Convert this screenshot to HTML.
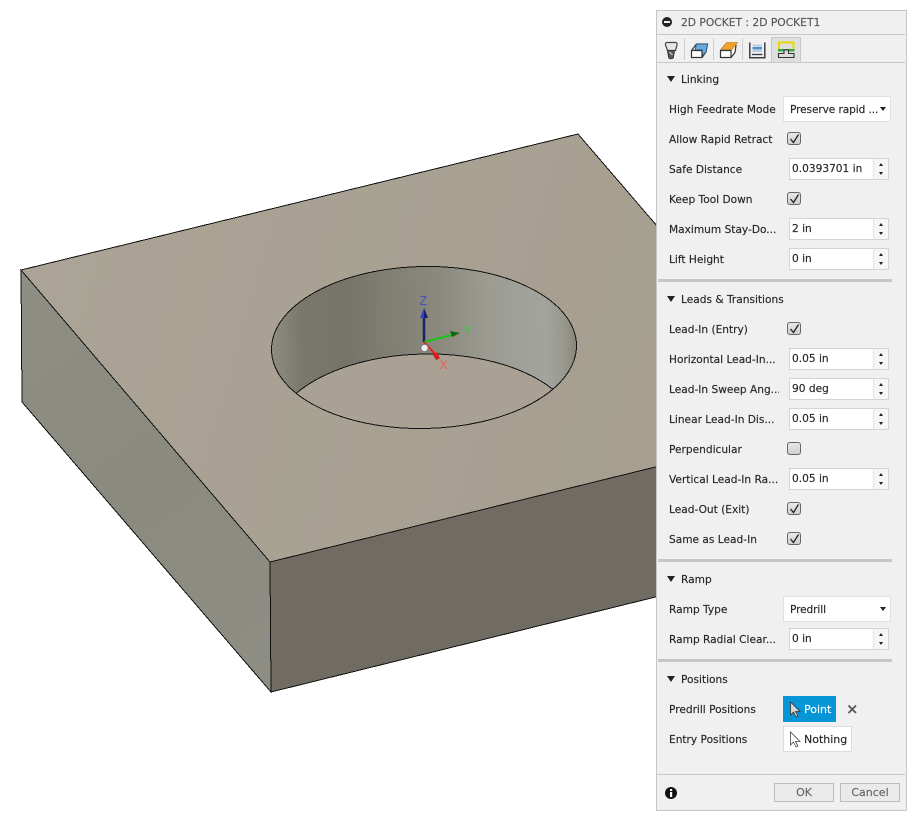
<!DOCTYPE html>
<html><head><meta charset="utf-8"><style>
html,body{margin:0;padding:0;background:#fff}
#r{position:relative;width:917px;height:818px;overflow:hidden;background:#fff;font-family:"DejaVu Sans","Liberation Sans",sans-serif;font-size:10.6px;color:#262626;-webkit-text-stroke:.15px}
#r svg{position:absolute;left:0;top:0}
.p{position:absolute;left:656px;top:10px;width:249px;height:799px;background:#f0f0f0;border:1px solid #c6c6c6}
.a{position:absolute;white-space:nowrap}
.l{position:absolute;left:669px;white-space:nowrap;line-height:18px;width:110px;overflow:hidden}
.h{position:absolute;left:681px;white-space:nowrap;line-height:18px}
.t{position:absolute;left:667px;width:0;height:0;border-left:4.500px solid transparent;border-right:4.500px solid transparent;border-top:6px solid #222}
.s{position:absolute;left:658px;width:234px;height:3px;background:#c6c6c6}
.i{position:absolute;left:789px;width:98px;height:20px;background:#fff;border:1px solid #d4d4d4;line-height:21px;box-sizing:content-box}
.i span{position:absolute;left:2px;top:0}
.i b{position:absolute;left:83px;top:0;width:14px;height:20px;background:#f6f6f6;border-left:1px solid #e2e2e2}
.i b:before{content:"";position:absolute;left:5px;top:4px;border:2.500px solid transparent;border-top:0;border-bottom:3px solid #222}
.i b:after{content:"";position:absolute;left:5px;top:13px;border:2.500px solid transparent;border-bottom:0;border-top:3px solid #222}
.c{position:absolute;left:787px;width:12px;height:11px;border:1px solid #666;border-radius:3px;background:linear-gradient(#e8e8e8,#cfcfcf)}
.d{position:absolute;left:783px;width:106px;height:24px;background:#fff;border:1px solid #e0e0e0;line-height:26px}
.d span{position:absolute;left:6px;top:0;letter-spacing:-.1px}
.d:after{content:"";position:absolute;right:4px;top:10px;border:3px solid transparent;border-bottom:0;border-top:4px solid #222}
.b{position:absolute;top:783px;height:17px;background:#eaeaea;border:1px solid #bdbdbd;color:#666;text-align:center;line-height:18px;font-size:11px}
</style></head><body><div id="r">
<svg width="917" height="818" viewBox="0 0 917 818">
<defs>
<linearGradient id="top" gradientUnits="userSpaceOnUse" x1="21" y1="270" x2="656" y2="450"><stop offset="0" stop-color="#aba496"/><stop offset="1" stop-color="#a69f90"/></linearGradient>
<linearGradient id="left" gradientUnits="userSpaceOnUse" x1="21" y1="300" x2="271" y2="650"><stop offset="0" stop-color="#8e8e84"/><stop offset=".5" stop-color="#8b8a7f"/><stop offset="1" stop-color="#8e8d83"/></linearGradient>
<linearGradient id="wall" gradientUnits="userSpaceOnUse" x1="271" y1="0" x2="577" y2="0">
<stop offset="0" stop-color="#8f8d81"/><stop offset=".1" stop-color="#7a776c"/><stop offset=".25" stop-color="#76736a"/><stop offset=".36" stop-color="#7f7c70"/><stop offset=".55" stop-color="#8b897e"/><stop offset=".72" stop-color="#9c9c93"/><stop offset=".9" stop-color="#a3a49c"/><stop offset=".96" stop-color="#98978d"/><stop offset="1" stop-color="#87857a"/></linearGradient>
<clipPath id="hole"><ellipse cx="424" cy="347.500" rx="152.500" ry="81" transform="rotate(-1 424 347.500)"/></clipPath>
</defs>
<g shape-rendering="crispEdges">
<polygon points="21,270 578,134 700,276 700,456 270,562" fill="url(#top)" stroke="#111" stroke-width="1"/>
<polygon points="21,270 270,562 271,692 22,402" fill="url(#left)" stroke="#111" stroke-width="1"/>
<polygon points="270,562 700,456 700,586 271,692" fill="#716c63" stroke="#111" stroke-width="1"/>
<ellipse cx="424" cy="347.500" rx="152.500" ry="81" transform="rotate(-1 424 347.500)" fill="url(#wall)"/>
<g clip-path="url(#hole)"><ellipse cx="425" cy="436" rx="153" ry="82" transform="rotate(-1 425 436)" fill="#a9a294" stroke="#111" stroke-width="1"/></g>
<ellipse cx="424" cy="347.500" rx="152.500" ry="81" transform="rotate(-1 424 347.500)" fill="none" stroke="#111" stroke-width="1"/>
</g>
<line x1="424" y1="342" x2="424" y2="316" stroke="#1b1f66" stroke-width="2.500"/>
<polygon points="424,308 420,318 428,318" fill="#2c3fd6"/>
<polygon points="424,308 424,318 428,318" fill="#1b1f66"/>
<line x1="424" y1="342" x2="452" y2="335" stroke="#16c416" stroke-width="2"/>
<polygon points="460,333 450,331 452,337" fill="#116611"/>
<line x1="424" y1="342" x2="436" y2="355" stroke="#ee1c1c" stroke-width="2"/>
<polygon points="440,358.500 436,360 433,355 437,352" fill="#d81f1f"/>
<circle cx="424.500" cy="348" r="3.700" fill="#eee" stroke="#777" stroke-width="1"/>
<text x="419.500" y="305" font-family="Liberation Sans" font-size="12.500" fill="#4a4ac8" style="-webkit-text-stroke:0">Z</text>
<text x="463.500" y="335" font-family="Liberation Sans" font-size="12" fill="#30d030" style="-webkit-text-stroke:0">Y</text>
<text x="439.500" y="369" font-family="Liberation Sans" font-size="12" fill="#ea5555" style="-webkit-text-stroke:0">X</text>
</svg>
<div class="p"></div>
<svg width="917" height="818" viewBox="0 0 917 818" style="z-index:2;pointer-events:none">
<line x1="657" y1="34.500" x2="905" y2="34.500" stroke="#c8c8c8"/>
<line x1="657" y1="62.500" x2="905" y2="62.500" stroke="#c8c8c8"/>
<line x1="657" y1="774.500" x2="905" y2="774.500" stroke="#c8c8c8"/>
<rect x="771.500" y="37.500" width="29" height="25" fill="#dedede" stroke="#c8c8c8"/>
<line x1="684.500" y1="38" x2="684.500" y2="60" stroke="#cdcdcd"/>
<line x1="713.500" y1="38" x2="713.500" y2="60" stroke="#cdcdcd"/>
<line x1="742.500" y1="38" x2="742.500" y2="60" stroke="#cdcdcd"/>
<circle cx="667" cy="22" r="5" fill="#222"/><rect x="664" y="21" width="6" height="2" fill="#eee"/>
<!-- tool -->
<path d="M667 42.500h8.500q2 0 1.500 2.500l-1.500 5.500h-8l-2-5.500q-.5-2.500 1.500-2.500z" fill="#e6e6e6" stroke="#444" stroke-width="1.200"/>
<path d="M667.500 50.500h7l-1.300 7.500q-2.200 1.500-4.400 0z" fill="#5a5a5a" stroke="#333"/>
<path d="M669.500 52l3 3" stroke="#ddd"/>
<!-- box blue -->
<path d="M691.500 50.500l5-6.500h11l-1.500 8-4 5.500h-10.500z" fill="#fff" stroke="#333" stroke-width="1.200"/>
<path d="M696.500 44h11l-1.500 8-4 4v-6h-7z" fill="#6aa9dc" stroke="#2c5f8f"/>
<path d="M691.500 50.500h10.500v7" fill="none" stroke="#333" stroke-width="1.200"/>
<!-- box orange -->
<path d="M720.500 50.500l4-5h11.500l-1 7-4 5h-10.500z" fill="#fff" stroke="#333" stroke-width="1.200"/>
<path d="M721 49.500l5.500-7h11l-5.500 7z" fill="#f0a030" stroke="#d08a20" stroke-width=".8"/>
<path d="M720.500 50.500h10.500v7" fill="none" stroke="#333" stroke-width="1.200"/>
<!-- layers -->
<path d="M749.800 42.500v15.200h15v-15.200" fill="none" stroke="#3a3f46" stroke-width="1.500"/>
<rect x="752.500" y="44.500" width="9.500" height="2" fill="#b8cde0"/><rect x="752.500" y="47" width="9.500" height="2.500" fill="#4f8fca"/><rect x="752.500" y="50" width="9.500" height="2" fill="#b8cde0"/>
<path d="M752 54.500h10.500" stroke="#3a3f46" stroke-width="1.300"/>
<!-- linking -->
<path d="M779 49.500v-7h14.500v7" fill="none" stroke="#e8d800" stroke-width="2"/>
<rect x="778" y="49" width="16.500" height="2.500" fill="#37a84a"/>
<path d="M778.500 57.500v-4h5.500v-3.500h4.500v3.500h5.500v4z" fill="#ddd" stroke="#333" stroke-width="1.100"/>
<circle cx="671" cy="793" r="6" fill="#111"/><rect x="670" y="792" width="2.200" height="5" fill="#fff"/><rect x="670" y="789" width="2.200" height="2" fill="#fff"/>
<path d="M848.500 705.500l7.500 7.500M856 705.500l-7.500 7.500" stroke="#555" stroke-width="1.800" fill="none"/>
</svg>
<div style="position:absolute;z-index:3;left:0;top:0;width:917px;height:818px">
<div class="a" style="left:681px;top:15px;line-height:16px;color:#555;font-size:10.700px">2D POCKET : 2D POCKET1</div>

<div class="t" style="top:76px"></div><div class="h" style="top:71px">Linking</div>
<div class="l" style="top:101px">High Feedrate Mode</div>
<div class="d" style="top:96px"><span>Preserve rapid ...</span></div>
<div class="l" style="top:131px">Allow Rapid Retract</div><div class="c" style="top:132px"></div>
<div class="l" style="top:161px">Safe Distance</div><div class="i" style="top:158px"><span>0.0393701 in</span><b></b></div>
<div class="l" style="top:191px">Keep Tool Down</div><div class="c" style="top:192px"></div>
<div class="l" style="top:221px">Maximum Stay-Do...</div><div class="i" style="top:218px"><span>2 in</span><b></b></div>
<div class="l" style="top:251px">Lift Height</div><div class="i" style="top:248px"><span>0 in</span><b></b></div>
<div class="s" style="top:279px"></div>

<div class="t" style="top:296px"></div><div class="h" style="top:291px">Leads &amp; Transitions</div>
<div class="l" style="top:321px">Lead-In (Entry)</div><div class="c" style="top:322px"></div>
<div class="l" style="top:351px">Horizontal Lead-In...</div><div class="i" style="top:348px"><span>0.05 in</span><b></b></div>
<div class="l" style="top:381px">Lead-In Sweep Ang...</div><div class="i" style="top:378px"><span>90 deg</span><b></b></div>
<div class="l" style="top:411px">Linear Lead-In Dis...</div><div class="i" style="top:408px"><span>0.05 in</span><b></b></div>
<div class="l" style="top:441px">Perpendicular</div><div class="c" style="top:442px"></div>
<div class="l" style="top:471px">Vertical Lead-In Ra...</div><div class="i" style="top:468px"><span>0.05 in</span><b></b></div>
<div class="l" style="top:501px">Lead-Out (Exit)</div><div class="c" style="top:502px"></div>
<div class="l" style="top:531px">Same as Lead-In</div><div class="c" style="top:532px"></div>
<div class="s" style="top:559px"></div>

<div class="t" style="top:576px"></div><div class="h" style="top:571px">Ramp</div>
<div class="l" style="top:601px">Ramp Type</div>
<div class="d" style="top:596px"><span>Predrill</span></div>
<div class="l" style="top:631px">Ramp Radial Clear...</div><div class="i" style="top:628px"><span>0 in</span><b></b></div>
<div class="s" style="top:659px"></div>

<div class="t" style="top:676px"></div><div class="h" style="top:671px">Positions</div>
<div class="l" style="top:701px">Predrill Positions</div>
<div class="a" style="left:783px;top:696px;width:53px;height:26px;background:#0696d7;color:#fff;line-height:27px;font-size:11px"><span class="a" style="left:21px">Point</span></div>
<div class="l" style="top:731px">Entry Positions</div>
<div class="a" style="left:783px;top:726px;width:67px;height:24px;background:#fff;border:1px solid #dcdcdc;line-height:25px;font-size:11px"><span class="a" style="left:20px">Nothing</span></div>
<div class="b" style="left:774px;width:58px">OK</div>
<div class="b" style="left:840px;width:58px">Cancel</div>
</div>
<svg width="917" height="818" viewBox="0 0 917 818" style="z-index:4">
<g fill="none" stroke="#222" stroke-width="1.300">
<path d="M790.500 139l3 3.500 5-8"/><path d="M790.500 199l3 3.500 5-8"/><path d="M790.500 329l3 3.500 5-8"/><path d="M790.500 509l3 3.500 5-8"/><path d="M790.500 539l3 3.500 5-8"/>
</g>
<path d="M790.500 702v13l3-3 2.500 5 2-1-2.500-4.500h4.500z" fill="#d8d8d8" stroke="#333" stroke-width=".8"/>
<path d="M790.500 732v13l3-3 2.500 5 2-1-2.500-4.500h4.500z" fill="#fff" stroke="#444" stroke-width=".8"/>
</svg>
</div></body></html>
